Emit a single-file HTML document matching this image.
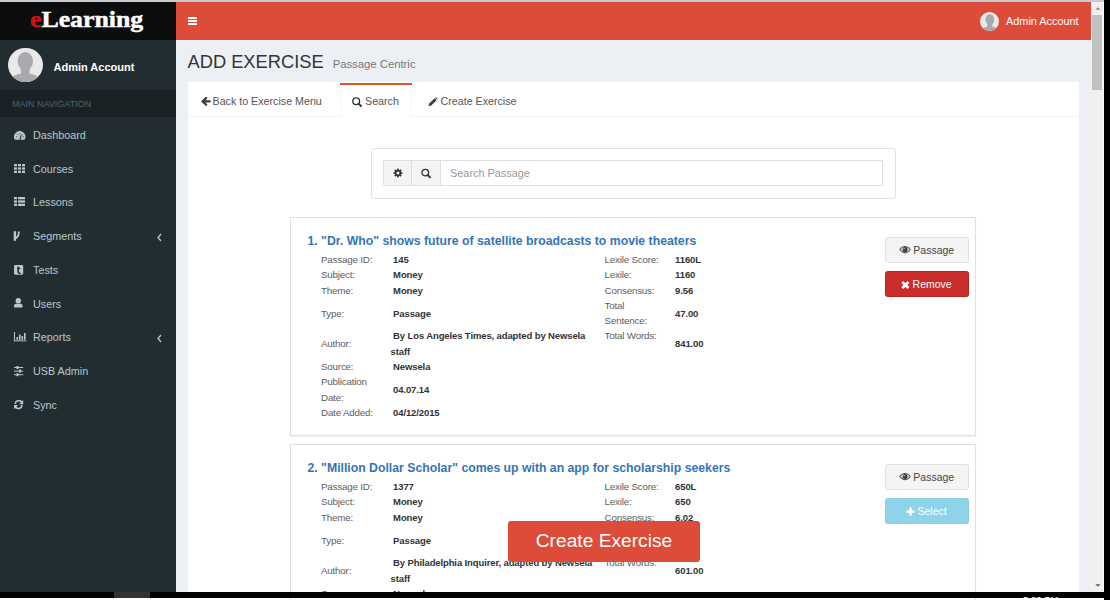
<!DOCTYPE html>
<html><head><meta charset="utf-8">
<style>
*{box-sizing:border-box;margin:0;padding:0}
html,body{width:1110px;height:600px;overflow:hidden;background:#fff}
body{position:relative;font-family:"Liberation Sans",sans-serif;color:#333}
.abs{position:absolute}
#topstrip{left:0;top:0;width:1104px;height:2px;background:#c9cbcd}
#blackR{left:1104px;top:0;width:6px;height:600px;background:#000}
#taskbar{left:0;top:592px;width:1104px;height:6px;background:#000}
#tbitem{left:114px;top:592px;width:36px;height:6px;background:#333}
#logo{left:0;top:2px;width:176px;height:38px;background:#0b0d0e}
#logo span.t{position:absolute;left:29.8px;top:2px;font-family:"Liberation Serif",serif;font-weight:bold;font-size:24px;color:#fff;line-height:30px;transform:scaleX(1.075);transform-origin:0 0;-webkit-text-stroke:0.5px #fff}
#logo span.t b{-webkit-text-stroke:0.5px #d40f0f}
#logo span.t b{color:#d40f0f}
#navbar{left:176px;top:2px;width:915px;height:38px;background:#dd4b39}
#sidebar{left:0;top:40px;width:176px;height:552px;background:#222d32}
#content{left:176px;top:40px;width:915px;height:552px;background:#ecf0f5;overflow:hidden}
#scroll{left:1091px;top:2px;width:13px;height:590px;background:#f0f0f0}
#thumb{left:1092px;top:15px;width:10px;height:75px;background:#c1c1c1}
.navhdr{left:0;top:50px;width:176px;height:27px;background:#1a2226;color:#4b646f;font-size:9px;line-height:28.4px;padding-left:12px;overflow:hidden}
.mi{position:absolute;left:0;width:176px;height:34px;color:#b8c7ce;font-size:10.8px}
.mi .tx{position:absolute;left:33px;top:0;line-height:34px}
.mi svg{position:absolute;left:14px;top:12px}
.tab{position:absolute;top:2px;height:34px;color:#555;font-size:10.7px}
.tab span{position:absolute;top:0;line-height:34px;white-space:nowrap}

.card{position:absolute;left:290px;width:686px;height:219px;border:1px solid #e0e0e0;background:#fff;box-shadow:0 1px 1px rgba(0,0,0,0.06)}
.card h3{position:absolute;left:16.5px;top:15px;font-size:12.25px;font-weight:bold;color:#3574b6;line-height:16px;white-space:nowrap}
.card table{position:absolute;left:30px;top:34px;border-collapse:collapse;border-spacing:0;font-size:9.8px;line-height:15.3px}
.card td{padding:0;vertical-align:middle;white-space:nowrap}
.card td.l{color:#5e5e5e;width:69.6px;letter-spacing:-0.2px}
.card td.v{color:#333;font-weight:bold;letter-spacing:-0.12px;font-size:9.5px}
.card td.v2{width:214px}
.card td.l2{width:70.5px}
.btn{position:absolute;left:594px;width:84px;height:25.6px;border-radius:2.5px;font-size:10.5px;line-height:24px;white-space:nowrap}
.btn span{position:absolute;top:0}
.btn-def{background:#f4f4f4;border:1px solid #e1e1e1;color:#444}
.btn-red{background:#ca2d2a;border:1px solid #b52420;color:#fff}
.btn-info{background:#8fd3e8;border:1px solid #88cfe4;color:#fff}
.mi .chev{position:absolute;left:156.5px;top:13.5px}
</style></head>
<body>
<div id="topstrip" class="abs"></div>
<div id="logo" class="abs"><span class="t"><b>e</b>Learning</span></div>
<div id="navbar" class="abs">
 <div class="abs" style="left:12px;top:15px;width:9.4px;height:1.9px;background:#fff"></div>
 <div class="abs" style="left:12px;top:18.1px;width:9.4px;height:1.9px;background:#fff"></div>
 <div class="abs" style="left:12px;top:21.2px;width:9.4px;height:1.9px;background:#fff"></div>
 <div class="abs" style="left:803.5px;top:9.5px;width:19.4px;height:19.4px;border-radius:50%;background:#e9e9ea;overflow:hidden">
  <svg width="20" height="20" viewBox="0 0 35 35" style="position:absolute;left:0;top:0">
   <ellipse cx="17.3" cy="13.2" rx="7.7" ry="9.2" fill="#a8aaad"/>
   <path d="M12.5 19 L13 25.5 C9 26.5 5 27.5 3 29.5 L1 35 L34 35 L31.5 29.5 C29.5 27.5 25.5 26.5 21.5 25.5 L22 19 Z" fill="#a8aaad"/>
  </svg>
 </div>
 <div class="abs" style="left:830px;top:12px;color:#fff;font-size:10.9px;line-height:14px">Admin Account</div>
</div>
<div id="sidebar" class="abs">
 <div class="abs" style="left:8px;top:7.5px;width:34.5px;height:34.5px;border-radius:50%;background:#e9e9ea;overflow:hidden">
  <svg width="35" height="35" viewBox="0 0 35 35" style="position:absolute;left:0;top:0">
   <ellipse cx="17.3" cy="13.2" rx="7.7" ry="9.2" fill="#a8aaad"/>
   <path d="M12.5 19 L13 25.5 C9 26.5 5 27.5 3 29.5 L1 35 L34 35 L31.5 29.5 C29.5 27.5 25.5 26.5 21.5 25.5 L22 19 Z" fill="#a8aaad"/>
  </svg>
 </div>
 <div class="abs" style="left:53.5px;top:20px;color:#fff;font-weight:bold;font-size:11px;line-height:14px">Admin Account</div>
 <div class="abs navhdr">MAIN NAVIGATION</div>
 <div class="mi" style="top:78px"><svg width="12" height="10" viewBox="0 0 12 10" style="top:13px"><path d="M0.9 8.8 A5.65 5.65 0 1 1 10.5 8.8 Z" fill="#b8c7ce"/><g stroke="#222d32" stroke-width="0.9"><line x1="6" y1="2.3" x2="6" y2="3.2"/><line x1="2.4" y1="5.6" x2="3.2" y2="5.9"/><line x1="9.6" y1="5.6" x2="8.8" y2="5.9"/><line x1="3.7" y1="3.3" x2="4.2" y2="4"/><line x1="8.3" y1="3.3" x2="7.8" y2="4"/><line x1="6" y1="8.6" x2="7.2" y2="4.2" stroke-width="1.1"/></g></svg><span class="tx">Dashboard</span></div>
 <div class="mi" style="top:111.7px"><svg style="top:12.30px" width="12" height="10" viewBox="0 0 12 10"><g fill="#b8c7ce"><rect x="0" y="0" width="3" height="2.3"/><rect x="4" y="0" width="3" height="2.3"/><rect x="8" y="0" width="3" height="2.3"/><rect x="0" y="3.35" width="3" height="2.3"/><rect x="4" y="3.35" width="3" height="2.3"/><rect x="8" y="3.35" width="3" height="2.3"/><rect x="0" y="6.7" width="3" height="2.3"/><rect x="4" y="6.7" width="3" height="2.3"/><rect x="8" y="6.7" width="3" height="2.3"/></g></svg><span class="tx">Courses</span></div>
 <div class="mi" style="top:145.4px"><svg style="top:11.60px" width="12" height="10" viewBox="0 0 12 10"><g fill="#b8c7ce"><rect x="0" y="0" width="3" height="2.3"/><rect x="4" y="0" width="7" height="2.3"/><rect x="0" y="3.35" width="3" height="2.3"/><rect x="4" y="3.35" width="7" height="2.3"/><rect x="0" y="6.7" width="3" height="2.3"/><rect x="4" y="6.7" width="7" height="2.3"/></g></svg><span class="tx">Lessons</span></div>
 <div class="mi" style="top:179.1px"><svg width="12" height="12" viewBox="0 0 12 12" style="left:12px;top:11.90px"><g stroke="#b8c7ce" fill="none"><path d="M2.9 0.2 L2.9 9.8" stroke-width="2.4"/><path d="M3.5 7.3 C5.8 6.5 6.8 4.5 6.9 0.6" stroke-width="1.9"/></g></svg><span class="tx">Segments</span><svg class="chev" width="5" height="9" viewBox="0 0 5 9"><path d="M4 1 L1 4.5 L4 8" stroke="#b8c7ce" stroke-width="1.3" fill="none"/></svg></div>
 <div class="mi" style="top:212.8px"><svg style="top:12.20px" width="12" height="11" viewBox="0 0 12 11"><rect x="0" y="0" width="9.2" height="9.7" rx="1.4" fill="#b8c7ce"/><path d="M4.2 1.6 L4.2 7 C4.2 8.2 5 8.5 6.6 8.3 M3 3.6 L6.3 3.6" stroke="#222d32" stroke-width="1.5" fill="none"/></svg><span class="tx">Tests</span></div>
 <div class="mi" style="top:246.5px"><svg style="top:11.50px" width="12" height="11" viewBox="0 0 12 11"><circle cx="4.3" cy="2.8" r="2.7" fill="#b8c7ce"/><path d="M0 9.4 L0 8 C0 6.3 1.5 5.8 2.6 5.6 C3.6 6.1 5 6.1 6 5.6 C7.1 5.8 8.6 6.3 8.6 8 L8.6 9.4 Z" fill="#b8c7ce"/></svg><span class="tx">Users</span></div>
 <div class="mi" style="top:280.2px"><svg style="top:11.80px" width="14" height="11" viewBox="0 0 14 11"><g fill="#b8c7ce"><rect x="0" y="0" width="1" height="9.2"/><rect x="0" y="8.4" width="12.5" height="0.9"/><rect x="2.5" y="5" width="1.6" height="2.8"/><rect x="5" y="2.5" width="1.6" height="5.3"/><rect x="7.5" y="4" width="1.6" height="3.8"/><rect x="10" y="1" width="1.6" height="6.8"/></g></svg><span class="tx">Reports</span><svg class="chev" width="5" height="9" viewBox="0 0 5 9"><path d="M4 1 L1 4.5 L4 8" stroke="#b8c7ce" stroke-width="1.3" fill="none"/></svg></div>
 <div class="mi" style="top:313.9px"><svg style="top:12.10px" width="12" height="11" viewBox="0 0 12 11"><g fill="#b8c7ce"><rect x="0" y="1" width="9.2" height="1"/><rect x="0" y="4.6" width="9.2" height="1"/><rect x="0" y="8.2" width="9.2" height="1"/><rect x="2.5" y="0" width="2" height="3"/><rect x="5" y="3.6" width="2" height="3"/><rect x="2.5" y="7.2" width="2" height="3"/></g></svg><span class="tx">USB Admin</span></div>
 <div class="mi" style="top:347.6px"><svg style="top:12.40px" width="12" height="11" viewBox="0 0 12 11"><g fill="none" stroke="#b8c7ce" stroke-width="1.6"><path d="M1.2 4 A3.7 3.7 0 0 1 8 2.4"/><path d="M8 5.2 A3.7 3.7 0 0 1 1.2 6.8"/></g><g fill="#b8c7ce"><path d="M9.2 0 L9.2 4.2 L5 4.2 Z"/><path d="M0 9.2 L0 5 L4.2 5 Z"/></g></svg><span class="tx">Sync</span></div>
</div>
<div id="content" class="abs"></div>
<div class="abs" style="left:187.5px;top:49.7px;font-size:18.3px;line-height:24px;color:#333;white-space:nowrap">ADD EXERCISE<span style="font-size:11.3px;color:#777;margin-left:9px">Passage Centric</span></div>
<div id="box" class="abs" style="left:188px;top:82px;width:891px;height:520px;background:#fff">
 <div class="abs" style="left:0;top:33.5px;width:891px;height:1px;background:#f4f4f4"></div>
 <div class="abs" style="left:151.5px;top:2px;width:72.5px;height:32.5px;border-left:1px solid #f4f4f4;border-right:1px solid #f4f4f4;background:#fff"></div>
 <div class="abs" style="left:151.7px;top:0.7px;width:72.3px;height:2.3px;background:#e2521c"></div>
 <div class="tab" style="left:12px">
  <svg width="10" height="10" viewBox="0 0 10 10" style="position:absolute;left:0.5px;top:13px"><path d="M8.7 4.4 L2 4.4 M5.2 1.1 L1.5 4.4 L5.2 7.8" stroke="#3d3d3d" stroke-width="2.2" fill="none" stroke-linecap="round" stroke-linejoin="round"/></svg>
  <span style="left:12.5px">Back to Exercise Menu</span>
 </div>
 <div class="tab" style="left:164px">
  <svg width="10" height="10" viewBox="0 0 10 10" style="position:absolute;left:0;top:13px"><circle cx="4.2" cy="4.2" r="3.4" stroke="#333" stroke-width="1.35" fill="none"/><path d="M6.6 6.6 L9 9" stroke="#333" stroke-width="1.8" stroke-linecap="round"/></svg>
  <span style="left:13px">Search</span>
 </div>
 <div class="tab" style="left:239.5px">
  <svg width="10" height="10" viewBox="0 0 10 10" style="position:absolute;left:0;top:12.8px"><path d="M0.6 9.2 L1.2 6.6 L6.6 1.2 L8.6 3.2 L3.2 8.6 Z" fill="#3d3d3d"/><path d="M7.1 0.7 L7.8 0.1 L9.7 2 L9.1 2.7 Z" fill="#3d3d3d"/></svg>
  <span style="left:13px">Create Exercise</span>
 </div>
</div>

<div class="abs" style="left:370.6px;top:148px;width:525px;height:50.5px;border:1px solid #e3e3e3;border-radius:3px;background:#fff"></div>
<div class="abs" style="left:383px;top:160px;width:57px;height:26px;border:1px solid #dfe0e2;border-right:none;background:#f4f4f4;border-radius:2px 0 0 2px"></div>
<div class="abs" style="left:410.8px;top:160px;width:1px;height:26px;background:#dcdcdc"></div>
<div class="abs" style="left:439.7px;top:160px;width:443.3px;height:26px;border:1px solid #dfe0e2;background:#fff"></div>
<svg class="abs" width="10" height="10" viewBox="0 0 10 10" style="left:393px;top:168px"><g fill="#333"><circle cx="5" cy="5" r="3.1"/><rect x="4.1" y="0.6" width="1.8" height="8.8"/><rect x="0.6" y="4.1" width="8.8" height="1.8"/><rect x="4.1" y="0.6" width="1.8" height="8.8" transform="rotate(45 5 5)"/><rect x="4.1" y="0.6" width="1.8" height="8.8" transform="rotate(-45 5 5)"/></g><circle cx="5" cy="5" r="1.5" fill="#f4f4f4"/></svg>
<svg class="abs" width="12" height="12" viewBox="0 0 12 12" style="left:420px;top:167px"><circle cx="5.3" cy="5.6" r="3.3" stroke="#333" stroke-width="1.35" fill="none"/><path d="M7.7 8 L10 10.3" stroke="#333" stroke-width="1.8" stroke-linecap="round"/></svg>
<div class="abs" style="left:450px;top:166px;font-size:10.9px;line-height:14px;color:#999">Search Passage</div>
<div class="card" style="top:217px">
 <h3>1. "Dr. Who" shows future of satellite broadcasts to movie theaters</h3>
 <table>
  <tr><td class="l">Passage ID:</td><td class="v v2">&nbsp;145</td><td class="l l2">Lexile Score:</td><td class="v">1160L</td></tr>
  <tr><td class="l">Subject:</td><td class="v">&nbsp;Money</td><td class="l">Lexile:</td><td class="v">1160</td></tr>
  <tr><td class="l">Theme:</td><td class="v">&nbsp;Money</td><td class="l">Consensus:</td><td class="v">9.56</td></tr>
  <tr><td class="l">Type:</td><td class="v">&nbsp;Passage</td><td class="l">Total<br>Sentence:</td><td class="v">47.00</td></tr>
  <tr><td class="l">Author:</td><td class="v">&nbsp;By Los Angeles Times, adapted by Newsela<br>staff</td><td class="l">Total Words:<br>&nbsp;</td><td class="v">841.00</td></tr>
  <tr><td class="l">Source:</td><td class="v">&nbsp;Newsela</td><td></td><td></td></tr>
  <tr><td class="l">Publication<br>Date:</td><td class="v">&nbsp;04.07.14</td><td></td><td></td></tr>
  <tr><td class="l">Date Added:</td><td class="v">&nbsp;04/12/2015</td><td></td><td></td></tr>
 </table>
 <div class="btn btn-def" style="top:19px"><svg width="12" height="8" viewBox="0 0 12 8" style="position:absolute;left:13px;top:7.7px"><path d="M0.2 3.6 C2 1 4 0.1 6 0.1 C8 0.1 10 1 11.8 3.6 C10 6.3 8 7.2 6 7.2 C4 7.2 2 6.3 0.2 3.6 Z" fill="#555"/><path d="M1.4 3.6 C3 1.8 4.5 1.1 6 1.1 C7.5 1.1 9 1.8 10.6 3.6 C9 5.4 7.5 6.1 6 6.1 C4.5 6.1 3 5.4 1.4 3.6 Z" fill="#e8e8e8"/><circle cx="6" cy="3.6" r="2.5" fill="#3a3a3a"/><circle cx="5.1" cy="2.8" r="0.7" fill="#ddd"/></svg><span style="left:27.3px">Passage</span></div>
 <div class="btn btn-red" style="top:53px"><svg width="9" height="8" viewBox="0 0 9 8" style="position:absolute;left:14.8px;top:8.6px"><path d="M1.3 1.1 L7.5 6.9 M7.5 1.1 L1.3 6.9" stroke="#fff" stroke-width="2.7"/></svg><span style="left:26.6px">Remove</span></div>
</div>
<div class="card" style="top:444px">
 <h3>2. "Million Dollar Scholar" comes up with an app for scholarship seekers</h3>
 <table>
  <tr><td class="l">Passage ID:</td><td class="v v2">&nbsp;1377</td><td class="l l2">Lexile Score:</td><td class="v">650L</td></tr>
  <tr><td class="l">Subject:</td><td class="v">&nbsp;Money</td><td class="l">Lexile:</td><td class="v">650</td></tr>
  <tr><td class="l">Theme:</td><td class="v">&nbsp;Money</td><td class="l">Consensus:</td><td class="v">6.02</td></tr>
  <tr><td class="l">Type:</td><td class="v">&nbsp;Passage</td><td class="l">Total<br>Sentence:</td><td class="v">38.00</td></tr>
  <tr><td class="l">Author:</td><td class="v">&nbsp;By Philadelphia Inquirer, adapted by Newsela<br>staff</td><td class="l">Total Words:<br>&nbsp;</td><td class="v">601.00</td></tr>
  <tr><td class="l">Source:</td><td class="v">&nbsp;Newsela</td><td></td><td></td></tr>
  <tr><td class="l">Publication<br>Date:</td><td class="v">&nbsp;04.07.14</td><td></td><td></td></tr>
  <tr><td class="l">Date Added:</td><td class="v">&nbsp;04/12/2015</td><td></td><td></td></tr>
 </table>
 <div class="btn btn-def" style="top:19px"><svg width="12" height="8" viewBox="0 0 12 8" style="position:absolute;left:13px;top:7.7px"><path d="M0.2 3.6 C2 1 4 0.1 6 0.1 C8 0.1 10 1 11.8 3.6 C10 6.3 8 7.2 6 7.2 C4 7.2 2 6.3 0.2 3.6 Z" fill="#555"/><path d="M1.4 3.6 C3 1.8 4.5 1.1 6 1.1 C7.5 1.1 9 1.8 10.6 3.6 C9 5.4 7.5 6.1 6 6.1 C4.5 6.1 3 5.4 1.4 3.6 Z" fill="#e8e8e8"/><circle cx="6" cy="3.6" r="2.5" fill="#3a3a3a"/><circle cx="5.1" cy="2.8" r="0.7" fill="#ddd"/></svg><span style="left:27.3px">Passage</span></div>
 <div class="btn btn-info" style="top:53px"><svg width="9" height="9" viewBox="0 0 9 9" style="position:absolute;left:19.6px;top:8px"><path d="M4.5 0.5 L4.5 8.5 M0.5 4.5 L8.5 4.5" stroke="#fff" stroke-width="2.3"/></svg><span style="left:31.5px">Select</span></div>
</div>
<div class="abs" style="left:508px;top:520.5px;width:192px;height:41.5px;background:#dd4b39;border-radius:3px;color:#fff;font-size:19.2px;line-height:40px;text-align:center">Create Exercise</div>
<div id="scroll" class="abs"></div>
<div id="thumb" class="abs"></div>
<svg class="abs" width="8" height="5" viewBox="0 0 8 5" style="left:1093.5px;top:6px"><path d="M1.3 3.8 L3.9 1.2 L6.5 3.8 Z" fill="#8a8a8a"/></svg>
<svg class="abs" width="8" height="5" viewBox="0 0 8 5" style="left:1093.5px;top:582.5px"><path d="M1.3 1.2 L3.9 3.8 L6.5 1.2 Z" fill="#606060"/></svg>
<div class="abs" style="left:1103px;top:2px;width:1px;height:590px;background:#fafafa"></div>
<div id="blackR" class="abs"></div>
<div id="taskbar" class="abs"></div>
<div id="tbitem" class="abs"></div>
<div class="abs" style="left:1010px;top:592px;width:60px;height:6px;overflow:hidden"><div style="position:absolute;left:13px;top:2.5px;color:#fff;font-size:9.5px;line-height:10px;white-space:nowrap">5:30 PM</div></div>

</body></html>
